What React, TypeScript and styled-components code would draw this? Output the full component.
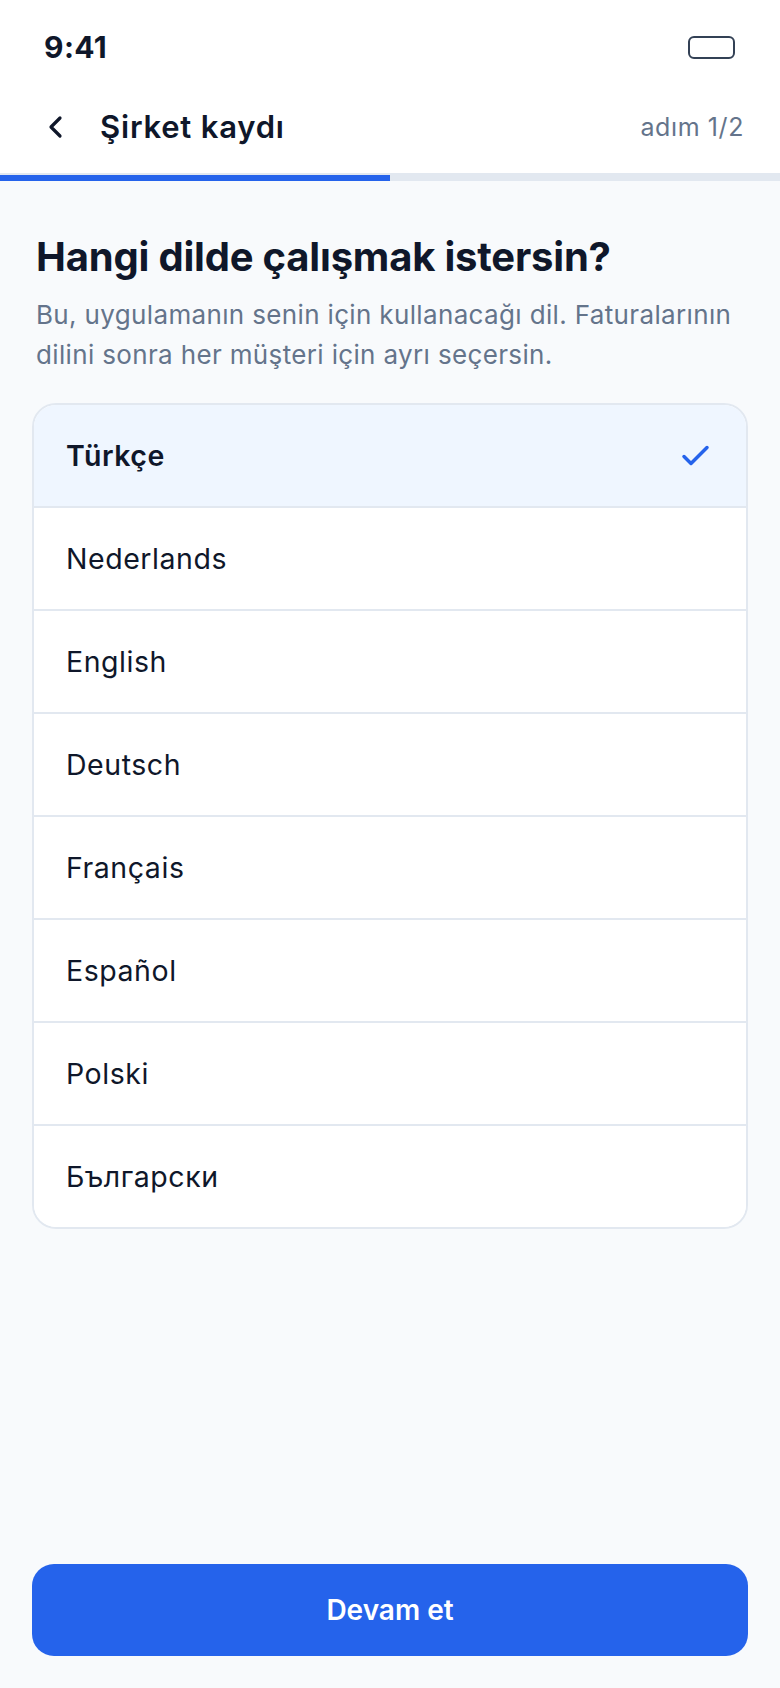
import React, { useState } from "react";
import styled, { createGlobalStyle } from "styled-components";

const GlobalStyle = createGlobalStyle`
  html, body { margin: 0; padding: 0; }
  body {
    font-family: Inter, "Noto Sans", "DejaVu Sans", sans-serif;
    background: #f8fafc;
    color: #0f172a;
    -webkit-font-smoothing: antialiased;
  }
  * { box-sizing: border-box; }
`;

const Screen = styled.div`
  min-height: 1688px;
  display: flex;
  flex-direction: column;
  background: #f8fafc;
`;

const Top = styled.div`
  background: #ffffff;
  display: flex;
  flex-direction: column;
`;

const StatusBar = styled.div`
  height: 94px;
  padding: 0 45px 0 44px;
  display: flex;
  align-items: center;
  justify-content: space-between;
`;

const Clock = styled.span`
  font-size: 30px;
  font-weight: 700;
  letter-spacing: 0.4px;
  color: #0f172a;
`;

const Battery = styled.span`
  width: 47px;
  height: 23px;
  border: 2.5px solid #334155;
  border-radius: 6px;
  display: block;
`;

const Header = styled.div`
  height: 81px;
  padding: 0 36px 14px 46px;
  display: flex;
  align-items: center;
  border-bottom: 2px solid #e2e8f0;
`;

const BackButton = styled.button`
  border: 0;
  background: none;
  padding: 0;
  margin: 0 34px 0 0;
  width: 20px;
  height: 26px;
  display: flex;
  align-items: center;
  cursor: pointer;
  color: #0f172a;
`;

const Title = styled.h1`
  margin: 0;
  flex: 1;
  font-size: 31px;
  font-weight: 600;
  color: #0f172a;
  letter-spacing: 0.8px;
`;

const Step = styled.span`
  font-size: 25px;
  letter-spacing: 0.6px;
  color: #64748b;
`;

const Track = styled.div`
  height: 6px;
  background: #e2e8f0;
  display: flex;
`;

const Fill = styled.div`
  height: 100%;
  background: #2563eb;
`;

const Content = styled.div`
  padding: 0 32px;
  display: flex;
  flex-direction: column;
`;

const Heading = styled.h2`
  margin: 52px 0 0 4px;
  font-size: 40px;
  line-height: 48px;
  font-weight: 700;
  letter-spacing: -0.2px;
  color: #0f172a;
`;

const Subtitle = styled.p`
  margin: 14px 0 0 4px;
  font-size: 26px;
  line-height: 40px;
  letter-spacing: 0.35px;
  color: #64748b;
`;

const Card = styled.div`
  margin-top: 28px;
  border: 2px solid #e2e8f0;
  border-radius: 24px;
  background: #ffffff;
  overflow: hidden;
  display: flex;
  flex-direction: column;
`;

const Row = styled.button<{ $selected: boolean }>`
  height: 103px;
  border: 0;
  border-top: 2px solid #e2e8f0;
  background: ${(p) => (p.$selected ? "#eff6ff" : "#ffffff")};
  padding: 0 36px 0 32px;
  display: flex;
  align-items: center;
  justify-content: space-between;
  font-family: inherit;
  font-size: 28.5px;
  letter-spacing: 0.55px;
  font-weight: ${(p) => (p.$selected ? 600 : 400)};
  color: #0f172a;
  text-align: left;
  cursor: pointer;
  &:first-child {
    border-top: 0;
    height: 101px;
  }
`;

const Spacer = styled.div`
  flex: 1;
`;

const Footer = styled.div`
  padding: 0 32px 32px;
`;

const PrimaryButton = styled.button`
  width: 100%;
  height: 92px;
  border: 0;
  border-radius: 22px;
  background: #2563eb;
  color: #ffffff;
  font-family: inherit;
  font-size: 28px;
  font-weight: 600;
  cursor: pointer;
`;

const languages = [
  "Türkçe",
  "Nederlands",
  "English",
  "Deutsch",
  "Français",
  "Español",
  "Polski",
  "Български",
];

const Check = () => (
  <svg width="30" height="24" viewBox="0 0 30 24" fill="none">
    <path
      d="M4 12.5 L11 19.5 L27 3.5"
      stroke="#2563eb"
      strokeWidth="3.5"
      strokeLinecap="round"
      strokeLinejoin="round"
    />
  </svg>
);

const Chevron = () => (
  <svg width="18" height="24" viewBox="0 0 18 24" fill="none">
    <path
      d="M14 3 L5 12 L14 21"
      stroke="currentColor"
      strokeWidth="3.2"
      strokeLinecap="round"
      strokeLinejoin="round"
    />
  </svg>
);

export default function App() {
  const [selected, setSelected] = useState("Türkçe");
  return (
    <>
      <GlobalStyle />
      <Screen>
        <Top>
          <StatusBar>
            <Clock>9:41</Clock>
            <Battery />
          </StatusBar>
          <Header>
            <BackButton aria-label="Geri">
              <Chevron />
            </BackButton>
            <Title>Şirket kaydı</Title>
            <Step>adım 1/2</Step>
          </Header>
          <Track>
            <Fill style={{ width: "50%" }} />
          </Track>
        </Top>
        <Content>
          <Heading>Hangi dilde çalışmak istersin?</Heading>
          <Subtitle>
            Bu, uygulamanın senin için kullanacağı dil. Faturalarının dilini
            sonra her müşteri için ayrı seçersin.
          </Subtitle>
          <Card>
            {languages.map((lang) => (
              <Row
                key={lang}
                $selected={lang === selected}
                onClick={() => setSelected(lang)}
              >
                <span>{lang}</span>
                {lang === selected && <Check />}
              </Row>
            ))}
          </Card>
        </Content>
        <Spacer />
        <Footer>
          <PrimaryButton>Devam et</PrimaryButton>
        </Footer>
      </Screen>
    </>
  );
}
